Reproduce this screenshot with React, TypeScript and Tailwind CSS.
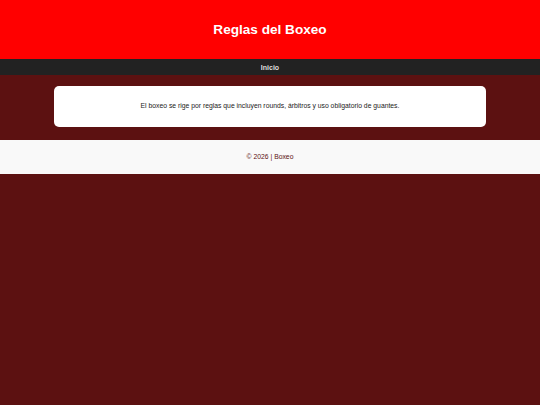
export default function App() {
  return (
    <div className="min-h-[405px] bg-[#5c1111]" style={{ fontFamily: '"Liberation Sans", Arial, sans-serif' }}>
      <header className="bg-[#ff0000] h-[59px] flex items-center justify-center">
        <h1 className="text-white font-bold text-[13.6px] leading-none">Reglas del Boxeo</h1>
      </header>
      <nav className="bg-[#222222] h-[16px] flex items-center justify-center">
        <span className="text-[#dddddd] font-bold text-[7px] leading-none">Inicio</span>
      </nav>
      <main className="pt-[11px] pb-[13px]">
        <div className="mx-auto w-[432px] h-[41px] bg-white rounded-[5px] flex items-center justify-center">
          <p className="text-[6.8px] text-[#222] leading-none">El boxeo se rige por reglas que incluyen rounds, árbitros y uso obligatorio de guantes.</p>
        </div>
      </main>
      <footer className="bg-[#f9f9f9] h-[34px] flex items-center justify-center">
        <p className="text-[6.8px] text-[#5c1111] leading-none">© 2026 | Boxeo</p>
      </footer>
    </div>
  );
}
